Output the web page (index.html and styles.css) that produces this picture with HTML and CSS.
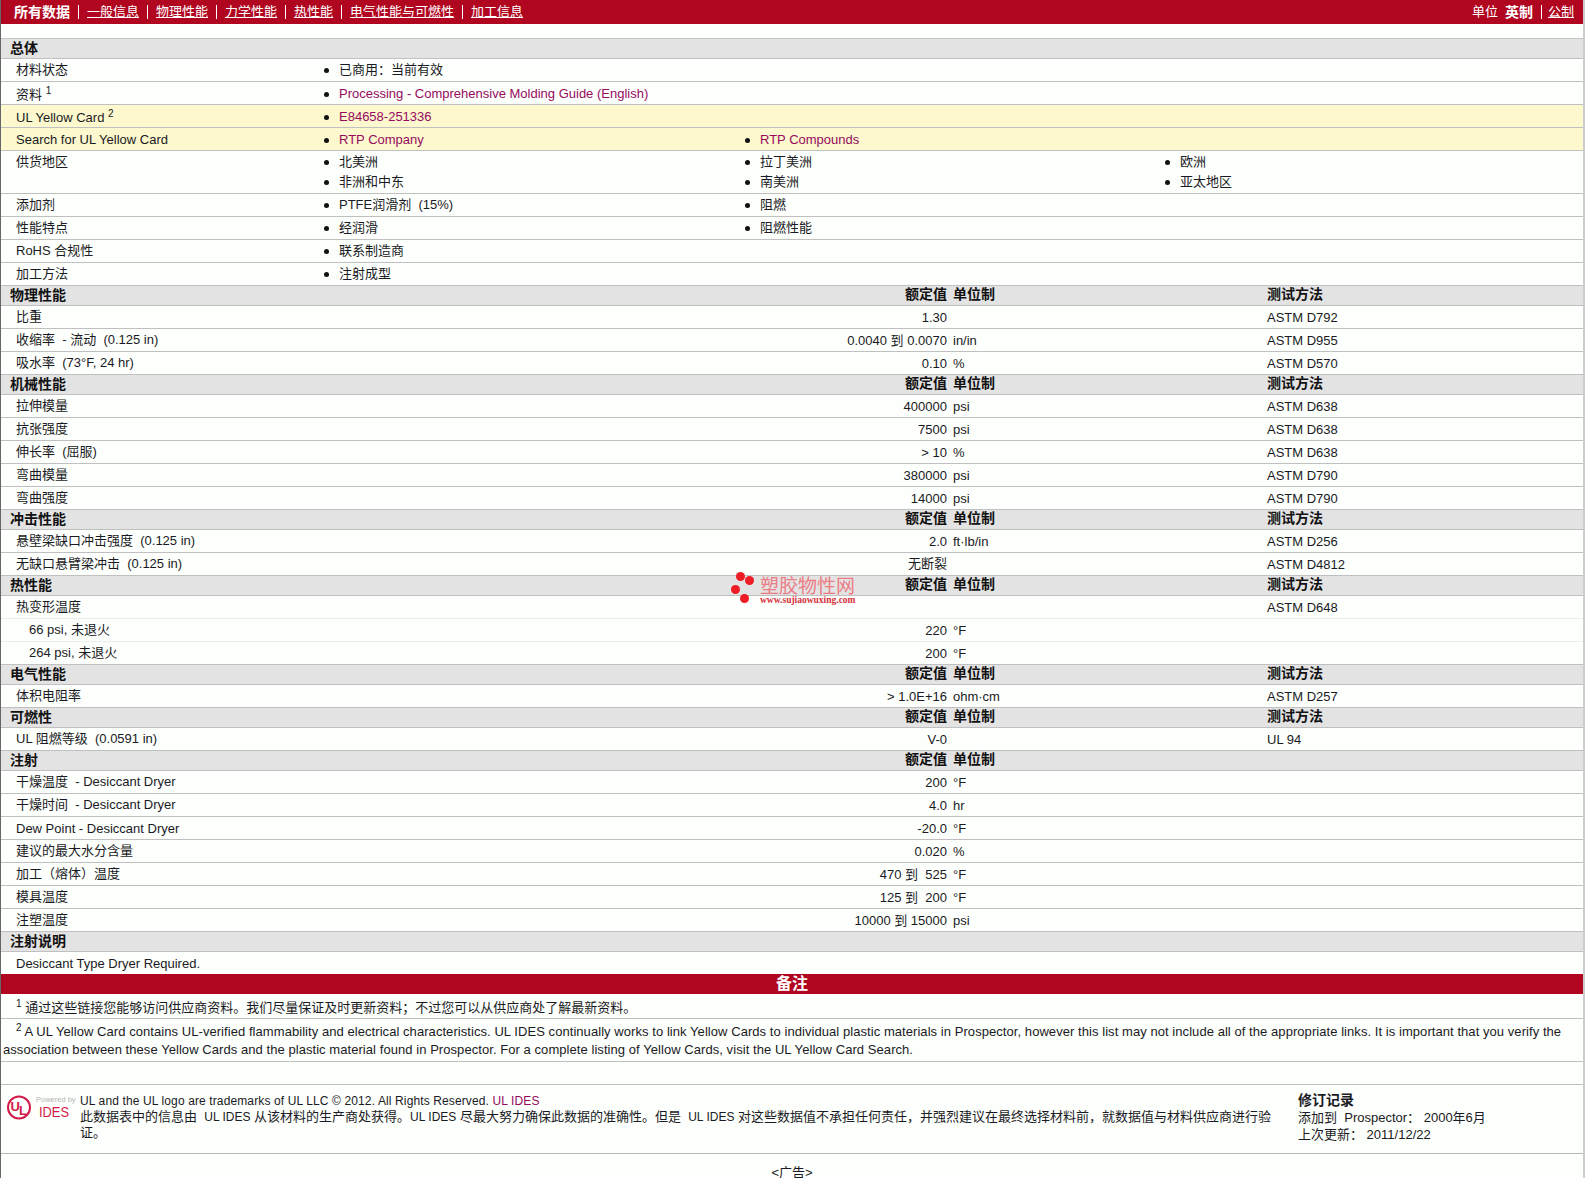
FILE: index.html
```html
<!DOCTYPE html>
<html lang="zh-CN">
<head>
    <meta charset="UTF-8">
    <title>物性表</title>
    <link rel="stylesheet" href="styles.css">
</head>
<body>
<div class="sheet">
    <div class="topbar">
        <nav class="nav">
            <b>所有数据</b><i class="sep"></i><a href="#">一般信息</a><i class="sep"></i><a href="#">物理性能</a><i class="sep"></i><a href="#">力学性能</a><i class="sep"></i><a href="#">热性能</a><i class="sep"></i><a href="#">电气性能与可燃性</a><i class="sep"></i><a href="#">加工信息</a>
        </nav>
        <div class="units">
            <span>单位</span><b>英制</b><i class="sep"></i><a href="#">公制</a>
        </div>
    </div>
    <div class="blank"></div>

    <table class="general">
        <colgroup><col class="c1"><col class="c2"><col class="c3"><col></colgroup>
        <tr class="sec"><th colspan="4">总体</th></tr>
        <tr><td class="name">材料状态</td><td colspan="3"><ul><li>已商用：当前有效</li></ul></td></tr>
        <tr class="has-sup"><td class="name">资料 <sup>1</sup></td><td class="lat" colspan="3"><ul><li><a href="#">Processing - Comprehensive Molding Guide (English)</a></li></ul></td></tr>
        <tr class="has-sup hl"><td class="name">UL Yellow Card <sup>2</sup></td><td class="lat" colspan="3"><ul><li><a href="#">E84658-251336</a></li></ul></td></tr>
        <tr class="hl"><td class="name lat">Search for UL Yellow Card</td><td class="lat"><ul><li><a href="#">RTP Company</a></li></ul></td><td class="lat" colspan="2"><ul><li><a href="#">RTP Compounds</a></li></ul></td></tr>
        <tr><td class="name">供货地区</td><td><ul><li>北美洲</li><li>非洲和中东</li></ul></td><td><ul><li>拉丁美洲</li><li>南美洲</li></ul></td><td><ul><li>欧洲</li><li>亚太地区</li></ul></td></tr>
        <tr><td class="name">添加剂</td><td><ul><li>PTFE润滑剂 &nbsp;(15%)</li></ul></td><td colspan="2"><ul><li>阻燃</li></ul></td></tr>
        <tr><td class="name">性能特点</td><td><ul><li>经润滑</li></ul></td><td colspan="2"><ul><li>阻燃性能</li></ul></td></tr>
        <tr><td class="name">RoHS 合规性</td><td colspan="3"><ul><li>联系制造商</li></ul></td></tr>
        <tr><td class="name">加工方法</td><td colspan="3"><ul><li>注射成型</li></ul></td></tr>
    </table>

    <table class="props">
        <colgroup><col class="c1"><col class="c2"><col class="c3"><col></colgroup>
        <tr class="sec"><th>物理性能</th><th class="val">额定值</th><th class="unit">单位制</th><th class="method">测试方法</th></tr>
        <tr><td class="name">比重</td><td class="val lat">1.30</td><td class="unit"></td><td class="lat">ASTM D792</td></tr>
        <tr><td class="name">收缩率 &nbsp;- 流动 &nbsp;(0.125 in)</td><td class="val lat">0.0040 到 0.0070</td><td class="unit lat">in/in</td><td class="lat">ASTM D955</td></tr>
        <tr><td class="name">吸水率 &nbsp;(73°F, 24 hr)</td><td class="val lat">0.10</td><td class="unit lat">%</td><td class="lat">ASTM D570</td></tr>

        <tr class="sec"><th>机械性能</th><th class="val">额定值</th><th class="unit">单位制</th><th class="method">测试方法</th></tr>
        <tr><td class="name">拉伸模量</td><td class="val lat">400000</td><td class="unit lat">psi</td><td class="lat">ASTM D638</td></tr>
        <tr><td class="name">抗张强度</td><td class="val lat">7500</td><td class="unit lat">psi</td><td class="lat">ASTM D638</td></tr>
        <tr><td class="name">伸长率 &nbsp;(屈服)</td><td class="val lat">&gt; 10</td><td class="unit lat">%</td><td class="lat">ASTM D638</td></tr>
        <tr><td class="name">弯曲模量</td><td class="val lat">380000</td><td class="unit lat">psi</td><td class="lat">ASTM D790</td></tr>
        <tr><td class="name">弯曲强度</td><td class="val lat">14000</td><td class="unit lat">psi</td><td class="lat">ASTM D790</td></tr>

        <tr class="sec"><th>冲击性能</th><th class="val">额定值</th><th class="unit">单位制</th><th class="method">测试方法</th></tr>
        <tr><td class="name">悬壁梁缺口冲击强度 &nbsp;(0.125 in)</td><td class="val lat">2.0</td><td class="unit lat">ft·lb/in</td><td class="lat">ASTM D256</td></tr>
        <tr><td class="name">无缺口悬臂梁冲击 &nbsp;(0.125 in)</td><td class="val">无断裂</td><td class="unit"></td><td class="lat">ASTM D4812</td></tr>

        <tr class="sec"><th>热性能</th><th class="val">额定值</th><th class="unit">单位制</th><th class="method">测试方法</th></tr>
        <tr class="soft"><td class="name">热变形温度</td><td class="val"></td><td class="unit"></td><td class="lat">ASTM D648</td></tr>
        <tr class="soft"><td class="name sub">66 psi, 未退火</td><td class="val lat">220</td><td class="unit lat">°F</td><td></td></tr>
        <tr><td class="name sub">264 psi, 未退火</td><td class="val lat">200</td><td class="unit lat">°F</td><td></td></tr>

        <tr class="sec"><th>电气性能</th><th class="val">额定值</th><th class="unit">单位制</th><th class="method">测试方法</th></tr>
        <tr><td class="name">体积电阻率</td><td class="val lat">&gt; 1.0E+16</td><td class="unit lat">ohm·cm</td><td class="lat">ASTM D257</td></tr>

        <tr class="sec"><th>可燃性</th><th class="val">额定值</th><th class="unit">单位制</th><th class="method">测试方法</th></tr>
        <tr><td class="name">UL 阻燃等级 &nbsp;(0.0591 in)</td><td class="val lat">V-0</td><td class="unit"></td><td class="lat">UL 94</td></tr>

        <tr class="sec"><th>注射</th><th class="val">额定值</th><th class="unit">单位制</th><th></th></tr>
        <tr><td class="name">干燥温度 &nbsp;- Desiccant Dryer</td><td class="val lat">200</td><td class="unit lat">°F</td><td></td></tr>
        <tr><td class="name">干燥时间 &nbsp;- Desiccant Dryer</td><td class="val lat">4.0</td><td class="unit lat">hr</td><td></td></tr>
        <tr><td class="name lat">Dew Point - Desiccant Dryer</td><td class="val lat">-20.0</td><td class="unit lat">°F</td><td></td></tr>
        <tr><td class="name">建议的最大水分含量</td><td class="val lat">0.020</td><td class="unit lat">%</td><td></td></tr>
        <tr><td class="name">加工（熔体）温度</td><td class="val lat">470 到 &nbsp;525</td><td class="unit lat">°F</td><td></td></tr>
        <tr><td class="name">模具温度</td><td class="val lat">125 到 &nbsp;200</td><td class="unit lat">°F</td><td></td></tr>
        <tr><td class="name">注塑温度</td><td class="val lat">10000 到 15000</td><td class="unit lat">psi</td><td></td></tr>

        <tr class="sec"><th colspan="4">注射说明</th></tr>
        <tr class="last"><td class="name lat" colspan="4">Desiccant Type Dryer Required.</td></tr>
    </table>

    <div class="notes-title">备注</div>
    <div class="note note-cn"><sup>1</sup> 通过这些链接您能够访问供应商资料。我们尽量保证及时更新资料；不过您可以从供应商处了解最新资料。</div>
    <div class="note note-en"><sup>2</sup> A UL Yellow Card contains UL-verified flammability and electrical characteristics. UL IDES continually works to link Yellow Cards to individual plastic materials in Prospector, however this list may not include all of the appropriate links. It is important that you verify the<br>association between these Yellow Cards and the plastic material found in Prospector. For a complete listing of Yellow Cards, visit the UL Yellow Card Search.</div>
    <div class="spacer"></div>

    <div class="footer">
        <div class="logo">
            <svg width="78" height="36" viewBox="0 0 78 36">
                <circle cx="17" cy="16.5" r="11" fill="none" stroke="#d3194a" stroke-width="2"/>
                <text class="logo-ul" x="8.5" y="20">U</text>
                <text class="logo-ul" x="17" y="24">L</text>
                <text class="logo-by" x="34" y="11">Powered by</text>
                <text class="logo-ides" x="37" y="26" textLength="30" lengthAdjust="spacingAndGlyphs">IDES</text>
            </svg>
        </div>
        <div class="legal">
            <div class="legal-en">UL and the UL logo are trademarks of UL LLC © 2012. All Rights Reserved. <a href="#">UL IDES</a></div>
            <div>此数据表中的信息由 &nbsp;<span class="ides">UL IDES</span> 从该材料的生产商处获得。<span class="ides">UL IDES</span> 尽最大努力确保此数据的准确性。但是 &nbsp;<span class="ides">UL IDES</span> 对这些数据值不承担任何责任，并强烈建议在最终选择材料前，就数据值与材料供应商进行验<br>证。</div>
        </div>
        <div class="history">
            <b>修订记录</b>
            <div>添加到 &nbsp;Prospector： 2000年6月</div>
            <div>上次更新： 2011/12/22</div>
        </div>
    </div>
    <div class="ad">&lt;广告&gt;</div>

    <div class="watermark">
        <i class="dot d1"></i><i class="dot d2"></i><i class="dot d3"></i><i class="dot d4"></i>
        <div class="wm-name">塑胶物性网</div>
        <div class="wm-url">www.sujiaowuxing.com</div>
    </div>
</div>
</body>
</html>
```

FILE: styles.css
```css
html, body {
    margin: 0;
    padding: 0;
    background-color: #fff;
}
body {
    font-family: "Liberation Sans", "Noto Sans CJK SC", sans-serif;
    font-size: 13px;
    color: #1a1a24;
    height: 1178px;
    overflow: hidden;
}
a {
    color: #960a60;
    text-decoration: none;
}
b {
    font-size: 14px;
}
.sheet {
    position: relative;
    height: 1178px;
    border-left: 1px solid #666;
    border-right: 2px solid #ccc;
    background-color: #fdfffc;
}

/* top red bar */
.topbar {
    display: flex;
    justify-content: space-between;
    height: 24px;
    padding: 0 9px 0 13px;
    line-height: 24px;
    background-color: #b0061f;
    color: #fff;
}
.topbar a {
    color: #fff;
    text-decoration: underline;
}
.nav, .units {
    display: flex;
    align-items: center;
}
.sep {
    width: 1px;
    height: 14px;
    margin: 0 8px;
    background-color: #fff;
}
.units b {
    margin-left: 7px;
}
.units .sep {
    margin-right: 6px;
}
.blank {
    height: 14px;
    border-bottom: 1px solid #c4c4c4;
}

/* tables */
table {
    width: 100%;
    table-layout: fixed;
    border-collapse: separate;
    border-spacing: 0;
}
th, td {
    padding: 1px 0;
    line-height: 20px;
    height: 20px;
    text-align: left;
    vertical-align: top;
    border-bottom: 1px solid #c0c0c0;
}
/* latin text sits a pixel lower than the chinese in the same row */
td.lat {
    padding: 2px 0 0;
}
.sec th {
    padding: 0;
    height: 19px;
    line-height: 19px;
    font-size: 14px;
    font-weight: bold;
    background-color: #e3e3e3;
    color: #111;
}
.sec th:first-child {
    padding-left: 9px;
}
.sec .val, .sec .unit, .sec .method {
    height: 17px;
    line-height: 17px;
    padding-bottom: 2px;
}
.hl td {
    background-color: #fdf8cd;
}
.soft td {
    border-bottom-color: #ececec;
}
.last td {
    border-bottom: none;
}
td.name, td.name.lat {
    padding-left: 15px;
}
.name.sub {
    padding-left: 28px;
}
.has-sup td.name {
    padding-top: 3px;
    padding-bottom: 0;
    height: 19px;
    line-height: 19px;
}
sup {
    font-size: 10px;
    line-height: 0;
}
.val, .sec .val {
    text-align: right;
}
.unit, td.unit, .sec .unit {
    padding-left: 6px;
}
.general .c1 { width: 322px; }
.general .c2 { width: 421px; }
.general .c3 { width: 420px; }
.props .c1 { width: 589px; }
.props .c2 { width: 357px; }
.props .c3 { width: 320px; }

/* bullet lists in the general block */
ul {
    margin: 0;
    padding: 0 0 0 1px;
    list-style: none;
}
li::before {
    content: "";
    display: inline-block;
    width: 5px;
    height: 5px;
    margin-right: 10px;
    border-radius: 50%;
    background-color: #111;
    vertical-align: 1px;
}

/* notes */
.notes-title {
    height: 20px;
    line-height: 20px;
    text-align: center;
    font-size: 16px;
    font-weight: bold;
    color: #fff;
    background-color: #b0061f;
}
.note {
    padding-left: 2px;
    border-bottom: 1px solid #c0c0c0;
    line-height: 18px;
}
.note sup {
    margin-left: 13px;
}
.note-cn {
    height: 19px;
    padding-top: 5px;
}
.note-en {
    height: 38px;
    padding-top: 4px;
    letter-spacing: 0.06px;
}
.spacer {
    height: 22px;
    border-bottom: 1px solid #c0c0c0;
}

/* footer */
.footer {
    display: flex;
    height: 68px;
    border-bottom: 1px solid #b8b8b8;
    line-height: 15px;
}
.logo {
    width: 79px;
    padding: 6px 0 0 1px;
    box-sizing: border-box;
}
.logo-ul {
    font-size: 13px;
    font-weight: bold;
    fill: #d3194a;
}
.logo-by {
    font-size: 7.5px;
    fill: #b5b5b5;
}
.logo-ides {
    font-size: 15px;
    fill: #d3194a;
}
.legal {
    width: 1202px;
    padding-top: 9px;
}
.legal-en {
    font-size: 12px;
    letter-spacing: 0.12px;
}
.ides {
    font-size: 12px;
}
.history {
    margin-left: 16px;
    padding-top: 7px;
    line-height: 17px;
}
.history b {
    display: block;
}
.ad {
    padding-top: 8px;
    text-align: center;
}

/* watermark image over the table */
.watermark {
    position: absolute;
    left: 729px;
    top: 571px;
    width: 135px;
    height: 36px;
    padding-left: 30px;
    box-sizing: border-box;
}
.dot {
    position: absolute;
    width: 9px;
    height: 9px;
    border-radius: 50%;
    background-color: #ee1c25;
}
.d1 { left: 6px; top: 1px; }
.d2 { left: 15px; top: 5px; }
.d3 { left: 1px; top: 14px; }
.d4 { left: 10px; top: 23px; }
.wm-name {
    font-size: 19px;
    line-height: 16px;
    color: #ec7c85;
    margin-top: 8px;
}
.wm-url {
    font-family: "Liberation Serif", serif;
    font-size: 9.5px;
    line-height: 10px;
    color: #d8323c;
    font-weight: bold;
}
```
